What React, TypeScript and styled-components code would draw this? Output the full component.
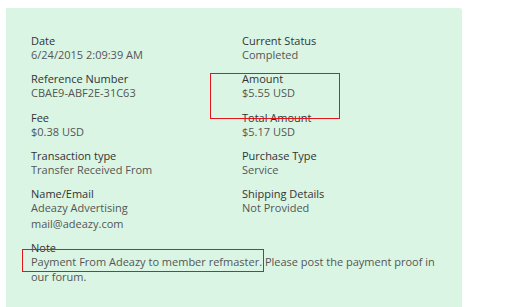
import React from "react";
import styled, { createGlobalStyle } from "styled-components";

const Global = createGlobalStyle`
  html, body { margin: 0; padding: 0; background: #fff; }
  body { font-family: "Open Sans", "Noto Sans", sans-serif; }
`;

const Page = styled.div`
  position: relative;
  width: 507px;
  height: 307px;
  overflow: hidden;
  padding: 8px 0 0 6px;
  box-sizing: border-box;
`;

const Panel = styled.div`
  width: 456px;
  min-height: 299px;
  box-sizing: border-box;
  background: #daf5e3;
  border-radius: 0 3px 0 0;
  padding: 26px 10px 20px 25px;
`;

const Grid = styled.div`
  display: grid;
  grid-template-columns: 211px 1fr;
  align-items: start;
`;

const Field = styled.div<{ $full?: boolean }>`
  grid-column: ${(p) => (p.$full ? "1 / -1" : "auto")};
  margin-bottom: 9.75px;
  font-size: 11px;
`;

const Label = styled.div`
  color: #333;
  line-height: 13px;
`;

const Value = styled.div`
  color: #555;
  line-height: 15.5px;
`;

const Marker = styled.div<{ $x: number; $y: number; $w: number; $h: number }>`
  position: absolute;
  left: ${(p) => p.$x}px;
  top: ${(p) => p.$y}px;
  width: ${(p) => p.$w}px;
  height: ${(p) => p.$h}px;
  border: 1px solid #e3141b;
  box-sizing: border-box;
  pointer-events: none;
`;

const rows: [string, string[], string, string[]][] = [
  ["Date", ["6/24/2015 2:09:39 AM"], "Current Status", ["Completed"]],
  ["Reference Number", ["CBAE9-ABF2E-31C63"], "Amount", ["$5.55 USD"]],
  ["Fee", ["$0.38 USD"], "Total Amount", ["$5.17 USD"]],
  ["Transaction type", ["Transfer Received From"], "Purchase Type", ["Service"]],
  ["Name/Email", ["Adeazy Advertising", "mail@adeazy.com"], "Shipping Details", ["Not Provided"]],
];

export default function App() {
  return (
    <>
      <Global />
      <Page>
        <Panel>
          <Grid>
            {rows.map(([l1, v1, l2, v2]) => (
              <React.Fragment key={l1}>
                <Field>
                  <Label>{l1}</Label>
                  {v1.map((v) => (
                    <Value key={v}>{v}</Value>
                  ))}
                </Field>
                <Field>
                  <Label>{l2}</Label>
                  {v2.map((v) => (
                    <Value key={v}>{v}</Value>
                  ))}
                </Field>
              </React.Fragment>
            ))}
            <Field $full>
              <Label>Note</Label>
              <Value>
                Payment From Adeazy to member refmaster. Please post the payment proof in our forum.
              </Value>
            </Field>
          </Grid>
        </Panel>
        <Marker $x={210} $y={73} $w={130} $h={46} />
        <Marker $x={22} $y={249} $w={242} $h={23} />
      </Page>
    </>
  );
}
